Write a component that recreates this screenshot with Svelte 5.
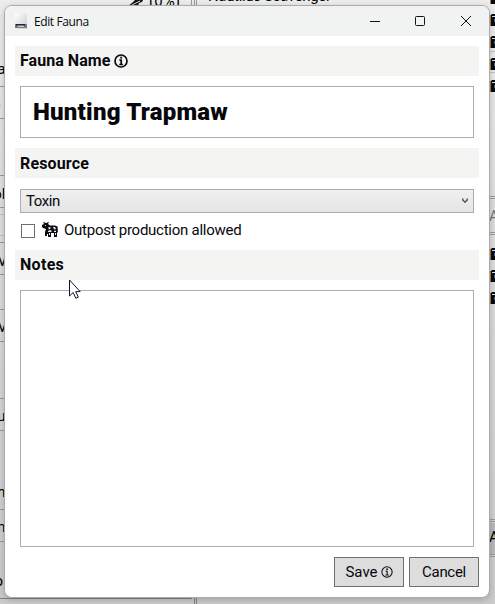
<script>
  let name = $state('Hunting Trapmaw');
  let allowed = $state(false);
  let notes = $state('');
  const leftLines = [86, 118, 175, 207, 242, 274, 309, 341, 398, 430, 509, 541];
  const leftText = [['a', 74], ['ol', 199], ['V', 266], ['V', 332], ['u', 421], ['-h', 497], ['n', 532], ['o', 586]];
  const rightLines = [196, 198, 232, 234, 519, 521, 554, 556];
  const cameras = [-7, 15, 37, 59, 81, 249, 271, 293];
</script>

{#snippet info(size, weight)}
  <svg class="info" width={size} height={size} viewBox="0 0 14 14" fill="none" stroke="#080810" stroke-width={weight}>
    <circle cx="7" cy="7" r="6" />
    <path d="M5.3 6H7.2V10.5M5.3 10.5H8.9" />
    <path d="M6.2 3.7H8.1" stroke-width="1.7" />
  </svg>
{/snippet}

<div class="screen">
  <svg class="backdrop" width="495" height="604">
    <defs>
      <linearGradient id="shade" x2="0" y2="1">
        <stop offset="0" stop-color="#ededed" /><stop offset=".4" stop-color="#dedede" /><stop offset="1" stop-color="#cbcbcb" />
      </linearGradient>
    </defs>
    <rect width="495" height="604" fill="url(#shade)" />
    <path d="M191.5 0V6M194.5 0V6M196.5 0V6" stroke="#999" />
    <path d="M0 598.5H191.5V597M194.5 597V604M196.5 597V604" fill="none" stroke="#808484" />
    <path d="M128 6L132 3L135 0H143L142 2L139 3L138 6Z" fill="#151515" />
    <path d="M132 5L140 1" stroke="#ddd" />
    <text x="149" y="6" textLength="31">[0%]</text>
    <text x="208" y="1" textLength="123">Nautilus Scavenger</text>
    {#each leftLines as y}<path d="M0 {y + 0.5}H6" stroke="#999" />{/each}
    <path d="M0 214.5H6M0 235.5H6" stroke="#c0c0c0" />
    <rect y="103" width="1" height="5" fill="#b9e4f5" />
    {#each leftText as [t, y]}<text x={t === 'o' ? 3 : t === 'V' ? 7 : 5.5} {y} text-anchor="end">{t}</text>{/each}
    <path d="M489 51.5H495M489 72.5H495" stroke="#c0c0c0" />
    <rect x="489" y="200" width="6" height="32" fill="#ddd" />
    <rect x="489" y="523" width="6" height="31" fill="#b8b8b8" />
    {#each rightLines as y}<path d="M489 {y + 0.5}H495" stroke="#999" />{/each}
    {#each cameras as y}
      <path d="M490 {y + 1}L492 {y - 1}H495V{y + 11}H491L490 {y + 10}Z" fill="#080a10" />
      <path d="M490.5 {y + 1}V{y + 10}" stroke="#c7771c" />
      <path d="M492 {y + 1.5}H495" stroke="#dce2e5" />
      <rect x="494" y={y + 4} width="1" height="3" fill="#3569a7" />
    {/each}
    <text x="489" y="221" fill="#777">A</text>
    <text x="489" y="542">A</text>
  </svg>

  <main class="window">
    <header>
      <svg width="12" height="16" viewBox="0 0 12 16">
        <defs><linearGradient id="doc" x2="1" y2="1"><stop stop-color="#fff" /><stop offset="1" stop-color="#ccc" /></linearGradient></defs>
        <rect width="12" height="16" fill="url(#doc)" />
        <rect y="11" width="12" height="4" fill="#777b82" /><path d="M1 13V11H10V13L8 12H3Z" fill="#202541" />
        <path d="M3 13.5H9" stroke="#c9cdd2" />
      </svg>
      <span>Edit Fauna</span>
      <svg class="controls" width="102" height="12" viewBox="0 0 102 12" fill="none" stroke="#111">
        <path d="M0 6.5H10" />
        <rect x="45.5" y="1.5" width="9" height="9" rx="1" />
        <path d="M91 1L101 11M101 1L91 11" />
      </svg>
    </header>
    <div class="body">
      <h2><span class="t1">Fauna Name</span>{@render info(14, 1.7)}</h2>
      <input class="name" bind:value={name} />
      <h2 class="resource"><span>Resource</span></h2>
      <button class="select"><span>Toxin</span>
        <svg width="6" height="6" viewBox="0 0 6 6" fill="none" stroke="#555" stroke-width="1.5"><path d="M.8 .5V2L3 4.2L5.2 2V.5" /></svg>
      </button>
      <label>
        <input type="checkbox" bind:checked={allowed} />
        <svg class="cow" width="16" height="16" viewBox="0 0 16 16">
          <path d="M0 3L2 2L1 0L4 1L7 0L6 2L8 3.5H13L15.5 4.5L16 11L15 10V15H12V11H9V15H6V12H5V14H3V10L4 7L1 6L0 5Z" fill="#0b0b10" />
          <path d="M6 5.5L8 5L9 6L7 7.5ZM11 5H13L14 7L12 7.5ZM6 9L8 8L10 9L9 10H6ZM12 9L14 8.5V10H12ZM3 3H4V4H3ZM8 11V13H7V11ZM14 11V13H13V11Z" fill="#e5e8ed" />
        </svg>
        <span>Outpost production allowed</span>
      </label>
      <h2 class="notes"><span>Notes</span></h2>
      <textarea bind:value={notes}></textarea>
      <footer>
        <button class="save"><span>Save</span>{@render info(12, 1.2)}</button>
        <button class="cancel"><span>Cancel</span></button>
      </footer>
    </div>
  </main>

  <svg class="cursor" width="13" height="21" viewBox="0 0 13 21">
    <path d="M1.5 1V17L5.2 13.5L7.8 19.3L10.3 18.2L7.7 12.6H12.2Z" fill="#fff" stroke="#171328" />
  </svg>
</div>

<style>
  .screen { position: relative; width: 495px; height: 604px; overflow: hidden; display: flex; font: 15px Roboto, sans-serif; color: #08080c; }
  .backdrop { position: absolute; inset: 0; }
  .backdrop text { font: 15px Roboto, sans-serif; }
  .window { position: relative; box-sizing: border-box; width: 486px; height: 593px; margin: 5px 0 0 4px; border: 1px solid #aaa; border-radius: 8px; background: #fff; overflow: hidden; box-shadow: 0 2px 7px #0003; }
  header { height: 30px; background: #f1f3f3; display: flex; align-items: center; padding-left: 10px; }
  header svg { flex: none; }
  header span { font: 12px "Open Sans", sans-serif; letter-spacing: -.4px; margin-left: 7px; }
  .controls { margin-left: auto; margin-right: 17px; }
  .body { padding: 10px; display: flex; flex-direction: column; }
  h2 { box-sizing: border-box; width: 464px; height: 30px; margin: 0; padding: 0 0 1px 5px; background: #f4f4f2; font-size: 16px; font-weight: 700; letter-spacing: .05px; display: flex; align-items: center; }
  .resource { padding-bottom: 0; letter-spacing: .15px; }
  .notes { letter-spacing: .3px; }
  .info { margin-left: 4px; flex: none; }
  input, textarea, button { box-sizing: border-box; font: inherit; color: inherit; border-radius: 0; outline: none; }
  .name { width: 454px; height: 52px; margin: 10px 5px; padding: 0 12px; border: 1px solid #abadb3; background: #fff; font-size: 24px; font-weight: 900; letter-spacing: .22px; }
  .select { width: 454px; height: 24px; margin: 11px 5px 9px; padding: 0 5px 1px; border: 1px solid #acacac; background: linear-gradient(#f0f0f0, #e5e5e5); display: flex; justify-content: space-between; align-items: center; letter-spacing: -.4px; }
  label { height: 16px; margin: 0 5px 12px; display: flex; align-items: center; letter-spacing: -.26px; }
  [type="checkbox"] { appearance: none; width: 14px; height: 14px; margin: 2px 7px 0 1px; border: 1px solid #707070; background: #fff; }
  .cow { margin-right: 6px; }
  textarea { width: 454px; height: 257px; margin: 10px 5px; border: 1px solid #abadb3; background: #fff; resize: none; display: block; }
  footer { display: flex; gap: 5px; justify-content: flex-end; }
  footer button { width: 70px; height: 30px; padding: 0; border: 1px solid #707070; background: #ddd; display: flex; align-items: center; justify-content: center; }
  .save .info { margin-left: 3px; }
  .cancel { letter-spacing: -.3px; }
  .cursor { position: absolute; left: 68px; top: 279px; }
</style>
